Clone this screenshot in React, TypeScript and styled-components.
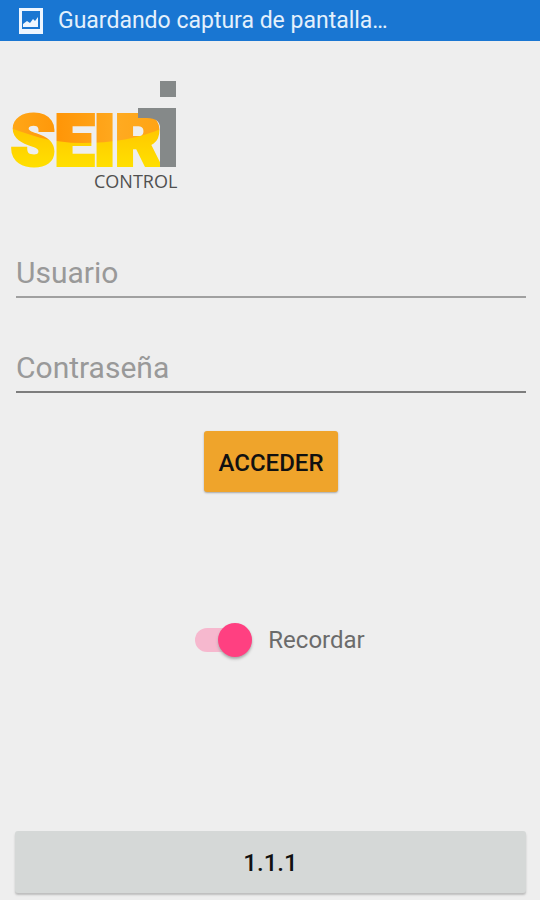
import React, { useState } from "react";
import styled, { createGlobalStyle } from "styled-components";

const GlobalStyle = createGlobalStyle`
  *, *::before, *::after { box-sizing: border-box; }
  body {
    margin: 0;
    background: #eeeeee;
    font-family: Roboto, "Noto Sans", sans-serif;
  }
  button, input { font-family: inherit; }
`;

const Screen = styled.div`
  display: flex;
  flex-direction: column;
  min-height: 100vh;
`;

const StatusBar = styled.header`
  display: flex;
  align-items: center;
  gap: 14px;
  height: 41px;
  padding: 0 18px;
  background: #1976d2;
  color: #e3f0fc;
  font-size: 23px;
  line-height: 40px;
  white-space: nowrap;
`;

const Content = styled.main`
  display: flex;
  flex: 1;
  flex-direction: column;
  padding: 36px 14px 7px 15px;
`;

const Logo = styled.svg`
  display: block;
  flex: none;
  width: 180px;
  height: 120px;
  margin-left: -8px;
`;

const Form = styled.form`
  display: flex;
  flex-direction: column;
  padding: 51px 0 0 1px;
`;

const Fields = styled.div`
  display: flex;
  flex-direction: column;
  gap: 45px;
  margin-bottom: 38px;
`;

const Field = styled.input<{ $line: string }>`
  width: 100%;
  height: 50px;
  padding: 0;
  border: 0;
  border-bottom: 2px solid ${(p) => p.$line};
  border-radius: 0;
  outline: 0;
  background: transparent;
  color: #333333;
  font-size: 30px;
  &::placeholder {
    color: #999999;
    opacity: 1;
  }
`;

const Button = styled.button<{ $color: string; $wide?: boolean }>`
  align-self: ${(p) => (p.$wide ? "stretch" : "center")};
  height: ${(p) => (p.$wide ? 62 : 61)}px;
  padding: 2px 15px 0;
  border: 0;
  border-radius: 3px;
  background: ${(p) => p.$color};
  box-shadow: ${(p) => (p.$wide ? "0 2px 2px #bdbdbd" : "0 1px 2px #a6a6a6")};
  color: #111111;
  font-size: 24px;
  font-weight: 500;
  cursor: pointer;
`;

const Remember = styled.label`
  display: flex;
  align-items: center;
  align-self: center;
  gap: 16px;
  margin-top: 130px;
  padding-left: 18px;
  color: #6b6b6b;
  font-size: 24px;
  line-height: 36px;
  cursor: pointer;
`;

const Switch = styled.input`
  position: relative;
  appearance: none;
  width: 57px;
  height: 24px;
  margin: 0;
  border-radius: 12px;
  background: #c4c4c4;
  cursor: pointer;
  &::before {
    content: "";
    position: absolute;
    top: -5px;
    left: 0;
    width: 34px;
    height: 34px;
    border-radius: 50%;
    background: #fafafa;
    box-shadow: 0 2px 3px #a8a8a8;
  }
  &:checked { background: #f6b8ce; }
  &:checked::before {
    left: 23px;
    background: #ff4081;
  }
`;

const Footer = styled.footer`
  display: flex;
  flex-direction: column;
  margin-top: auto;
`;

function SeiriLogo() {
  return (
    <Logo viewBox="7 77 180 120" role="img" aria-label="SEIRI CONTROL">
      <defs>
        <linearGradient id="amber" x1="0" x2="1" y1="0" y2="0">
          <stop offset="0" stopColor="#ffab1c" />
          <stop offset="0.3" stopColor="#ff9608" />
          <stop offset="0.6" stopColor="#ffaa20" />
          <stop offset="1" stopColor="#ff9c08" />
        </linearGradient>
        <linearGradient id="yellow" x1="0" x2="0" y1="0" y2="1">
          <stop offset="0" stopColor="#ffc400" />
          <stop offset="0.6" stopColor="#ffda00" />
          <stop offset="1" stopColor="#ffe600" />
        </linearGradient>
        <pattern id="wave" patternUnits="userSpaceOnUse" x="0" y="100" width="200" height="80">
          <rect width="200" height="80" fill="url(#amber)" />
          <path d="M0 24C28 35 52 43 82 43C112 43 139 39 165 27V80H0Z" fill="url(#yellow)" />
        </pattern>
      </defs>
      <text x="11" y="165" fontFamily="Roboto, sans-serif" fontSize="70" fontWeight="900" fill="url(#wave)" stroke="url(#wave)" strokeWidth="4">
        SEIR
      </text>
      <path d="M160 81H176V97H160ZM138 108H176V167H160V128Q160 118 147 118H138Z" fill="#858989" />
      <text x="94" y="188" fontFamily="Open Sans, sans-serif" fontSize="18" fill="#505050">
        CONTROL
      </text>
    </Logo>
  );
}

function PictureIcon() {
  return (
    <svg width="26" height="28" viewBox="0 0 26 28" aria-hidden="true">
      <path d="M1 1H25V27H1ZM4 4V22H22V4Z" fill="#eef6ff" fillRule="evenodd" />
      <path d="M5 20V17L9 14L12 16L15 12L17 14L20 10V20Z" fill="#eef6ff" />
    </svg>
  );
}

export default function App() {
  const [remember, setRemember] = useState(true);
  return (
    <>
      <GlobalStyle />
      <Screen>
        <StatusBar>
          <PictureIcon />
          <span>Guardando captura de pantalla…</span>
        </StatusBar>
        <Content>
          <SeiriLogo />
          <Form onSubmit={(e) => e.preventDefault()}>
            <Fields>
              <Field $line="#a0a0a0" type="text" placeholder="Usuario" aria-label="Usuario" />
              <Field $line="#7d7d7d" type="password" placeholder="Contraseña" aria-label="Contraseña" />
            </Fields>
            <Button $color="#efa42b" type="submit">ACCEDER</Button>
            <Remember>
              <Switch
                type="checkbox"
                role="switch"
                checked={remember}
                onChange={(e) => setRemember(e.target.checked)}
              />
              Recordar
            </Remember>
          </Form>
          <Footer>
            <Button $color="#d5d8d7" $wide type="button">1.1.1</Button>
          </Footer>
        </Content>
      </Screen>
    </>
  );
}
